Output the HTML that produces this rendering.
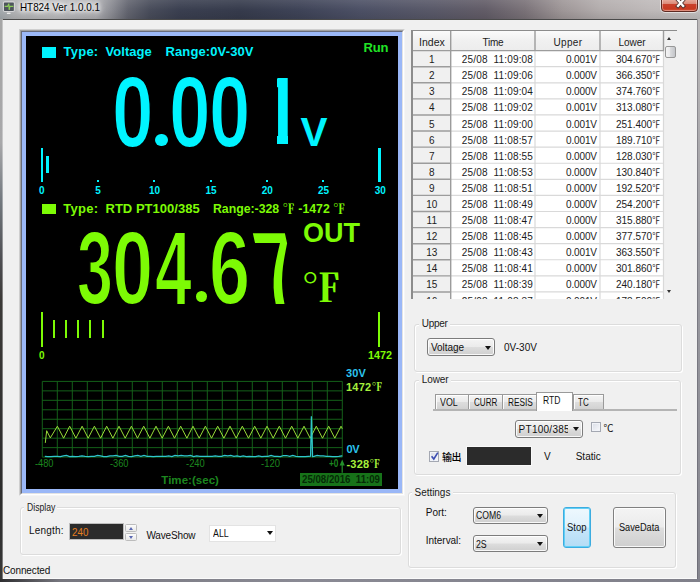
<!DOCTYPE html>
<html lang="en"><head><meta charset="utf-8"><title>HT824 Ver 1.0.0.1</title>
<style>
html,body{margin:0;padding:0}
body{width:700px;height:582px;overflow:hidden;position:relative;background:#f0f0f0;font-family:"Liberation Sans",sans-serif;font-size:10px;color:#000}
div,span,svg{box-sizing:border-box}
.abs{position:absolute}
.grp{position:absolute;border:1px solid #dcdcdc;border-radius:3px;box-shadow:1px 1px 0 #fff, inset 1px 1px 0 #fff}
.combo{position:absolute;border:1px solid #7c7c7c;border-radius:3px;background:linear-gradient(#f4f4f4,#ebebeb 48%,#dddddd 52%,#cfcfcf);box-shadow:inset 0 0 0 1px rgba(255,255,255,.85)}
.arr{position:absolute;width:0;height:0;border-left:3px solid transparent;border-right:3px solid transparent;border-top:4px solid #111}
.btn{position:absolute;border:1px solid #808080;border-radius:3px;background:linear-gradient(#f4f4f4,#ebebeb 48%,#dddddd 52%,#cfcfcf);box-shadow:inset 0 0 0 1px rgba(255,255,255,.85)}
.tab{position:absolute;border:1px solid #9a9a9a;border-bottom:none;background:linear-gradient(#f4f4f4,#ebebeb 48%,#dddddd 52%,#d2d2d2)}
</style></head><body>
<div class="window-chrome">
<div class="abs" style="left:0;top:0;width:700px;height:20px;background:linear-gradient(to right,#a4aaae 0,#b3b4b6 14px,#bcbcbe 55px,#aeaeb2 96px,#8a8b92 112px,#62646f 128px,#484c5a 150px,#3a3f50 180px,#363b4c 240px,#3e4357 300px,#4c5065 360px,#585868 430px,#625c67 485px,#7a7278 525px,#9e9697 562px,#b3adad 600px,#beb9b9 650px,#c2bfbf 700px)"></div>
<div class="abs" style="left:0;top:0;width:700px;height:20px;background:linear-gradient(to bottom,rgba(255,255,255,.10),rgba(255,255,255,0) 50%,rgba(0,0,0,.10))"></div>
<div class="abs" style="left:0;top:19px;width:700px;height:1px;background:#4a4a4a"></div>
<div class="abs" style="left:0;top:19px;width:3px;height:563px;background:linear-gradient(to bottom,#a6a6a6 0,#a8a8aa 22%,#747a80 32%,#4e4e52 43%,#3c3a38 50%,#2c2c2c 85%,#383838 100%)"></div>
<div class="abs" style="left:2px;top:20px;width:1px;height:559px;background:rgba(255,255,255,.35)"></div>
<div class="abs" style="left:697px;top:19px;width:3px;height:563px;background:linear-gradient(to bottom,#bdbaba 0,#9c9ca2 40%,#85858e 100%)"></div>
<div class="abs" style="left:697px;top:19px;width:1px;height:560px;background:rgba(70,70,80,.35)"></div>
<div class="abs" style="left:0;top:579px;width:700px;height:3px;background:linear-gradient(to right,#2e2e30 0,#77777f 60px,#8a8a94 300px,#80808a 700px)"></div>
<div class="abs" style="left:3px;top:578px;width:694px;height:1px;background:#fafafa"></div>
<svg class="abs" style="left:2px;top:0px" width="15" height="16" viewBox="0 0 15 16">
<rect x="1.4" y="1.9" width="11" height="9.6" rx="1.2" fill="#4d545c" stroke="#d6d6d8" stroke-width="1.1"/>
<path d="M2.6 6.4 H5.6 L6.8 3.6 L7.2 10 L7.9 6.4 H11.4" stroke="#8ccb5a" stroke-width="1.1" fill="none"/>
<rect x="4.9" y="12.7" width="3.6" height="1.3" fill="#ececec"/><rect x="6" y="11.8" width="1.5" height="1.2" fill="#c4c4c4"/></svg>
<span style="position:absolute;white-space:pre;line-height:1;left:20.00px;top:2.20px;font-family:'Liberation Sans','Noto Sans CJK SC',sans-serif;font-size:10.5px;font-weight:normal;color:#000;letter-spacing:0.000px;text-shadow:0 0 5px #fff,0 0 7px #fff,0 0 9px #fff,0 0 4px #fff;transform-origin:0 50%;transform:scaleX(0.9386);">HT824 Ver 1.0.0.1</span>
<div class="abs" style="left:661px;top:-2px;width:37px;height:14px;border:1px solid #5e2a22;border-radius:0 0 4px 4px;background:linear-gradient(#e9b0a2 0,#dc8b7a 38%,#c9402b 45%,#c83a22 80%,#d2553a 100%);box-shadow:0 0 0 1px rgba(255,255,255,.55), inset 0 0 0 1px rgba(255,255,255,.35)"></div>
<svg class="abs" style="left:674px;top:-3px" width="13" height="13" viewBox="0 0 13 13"><path d="M4 3 L9.2 9 M9.2 3 L4 9" stroke="#4a2f2c" stroke-width="3.9" stroke-linecap="square"/><path d="M4 3 L9.2 9 M9.2 3 L4 9" stroke="#fff" stroke-width="2.3" stroke-linecap="square"/></svg>
</div>
<div class="lcd-panel">
<div class="abs" style="left:19px;top:29px;width:386px;height:467px;border:1px solid;border-color:#cfcfcf #f6f6f6 #f6f6f6 #cfcfcf"></div>
<div class="abs" style="left:20px;top:30px;width:384px;height:465px;border:1px solid;border-color:#a0a0a0 #fff #fff #a0a0a0"></div>
<div class="abs" style="left:21px;top:31px;width:382px;height:463px;border:1px solid;border-color:#686c7c #e3e3e3 #e3e3e3 #686c7c;background:#000"></div>
<div class="abs" style="left:22px;top:32px;width:380px;height:461px;border:4px solid #9ab7f7;background:#000"></div>
<div class="abs" style="left:42px;top:47px;width:13.5px;height:10.5px;background:#00f4ff"></div>
<span style="position:absolute;white-space:pre;line-height:1;left:63.50px;top:45.30px;font-family:'Liberation Sans','Noto Sans CJK SC',sans-serif;font-size:13px;font-weight:bold;color:#00f4ff;letter-spacing:0.245px;">Type:</span>
<span style="position:absolute;white-space:pre;line-height:1;left:105.50px;top:45.30px;font-family:'Liberation Sans','Noto Sans CJK SC',sans-serif;font-size:13px;font-weight:bold;color:#00f4ff;letter-spacing:0.050px;">Voltage</span>
<span style="position:absolute;white-space:pre;line-height:1;left:165.50px;top:45.30px;font-family:'Liberation Sans','Noto Sans CJK SC',sans-serif;font-size:13px;font-weight:bold;color:#00f4ff;letter-spacing:0.118px;">Range:0V-30V</span>
<span style="position:absolute;white-space:pre;line-height:1;left:363.50px;top:40.80px;font-family:'Liberation Sans','Noto Sans CJK SC',sans-serif;font-size:13px;font-weight:bold;color:#20e426;letter-spacing:-0.141px;">Run</span>
<div class="abs" style="left:0;top:0;font:bold 100px/1 'Liberation Sans',sans-serif;color:#00f4ff;white-space:nowrap;-webkit-text-stroke:2px #000"><span style="position:absolute;left:111.97px;top:60.41px;transform-origin:0 0;transform:scale(0.7457,1.0246)">0</span><span style="position:absolute;left:155.40px;top:134.20px;width:12.20px;height:12.00px;overflow:hidden;border-radius:50%"><span style="position:absolute;left:-10.47px;top:-77.46px;transform-origin:0 0;transform:scale(1.1833,1.0769)">.</span></span><span style="position:absolute;left:168.86px;top:60.41px;transform-origin:0 0;transform:scale(0.7478,1.0246)">0</span><span style="position:absolute;left:209.08px;top:60.41px;transform-origin:0 0;transform:scale(0.7435,1.0246)">0</span><span style="position:absolute;left:277.20px;top:76.90px;width:10.70px;height:69.30px;overflow:hidden"><span style="position:absolute;left:-19.37px;top:-14.57px;transform-origin:0 0;transform:scale(0.8244,0.9746)">1</span></span></div>
<span style="position:absolute;white-space:pre;line-height:1;left:300.50px;top:111.70px;font-family:'Liberation Sans','Noto Sans CJK SC',sans-serif;font-size:40.5px;font-weight:bold;color:#00f4ff;letter-spacing:0.000px;">V</span>
<div class="abs" style="left:41px;top:148px;width:2.2px;height:34px;background:#00f4ff"></div>
<div class="abs" style="left:46.4px;top:156.3px;width:2.2px;height:16.7px;background:#00f4ff"></div>
<div class="abs" style="left:378.4px;top:148px;width:2.4px;height:34px;background:#00f4ff"></div>
<div class="abs" style="left:97px;top:179.6px;width:2px;height:2.2px;background:#00f4ff"></div>
<div class="abs" style="left:153.3px;top:179.6px;width:2px;height:2.2px;background:#00f4ff"></div>
<div class="abs" style="left:209.7px;top:179.6px;width:2px;height:2.2px;background:#00f4ff"></div>
<div class="abs" style="left:266px;top:179.6px;width:2px;height:2.2px;background:#00f4ff"></div>
<div class="abs" style="left:322.4px;top:179.6px;width:2px;height:2.2px;background:#00f4ff"></div>
<span style="position:absolute;white-space:pre;line-height:1;left:38.92px;top:186.40px;font-family:'Liberation Sans','Noto Sans CJK SC',sans-serif;font-size:10px;font-weight:bold;color:#00f4ff;letter-spacing:0.000px;">0</span>
<span style="position:absolute;white-space:pre;line-height:1;left:95.22px;top:186.40px;font-family:'Liberation Sans','Noto Sans CJK SC',sans-serif;font-size:10px;font-weight:bold;color:#00f4ff;letter-spacing:0.000px;">5</span>
<span style="position:absolute;white-space:pre;line-height:1;left:149.04px;top:186.40px;font-family:'Liberation Sans','Noto Sans CJK SC',sans-serif;font-size:10px;font-weight:bold;color:#00f4ff;letter-spacing:0.000px;">10</span>
<span style="position:absolute;white-space:pre;line-height:1;left:205.44px;top:186.40px;font-family:'Liberation Sans','Noto Sans CJK SC',sans-serif;font-size:10px;font-weight:bold;color:#00f4ff;letter-spacing:0.000px;">15</span>
<span style="position:absolute;white-space:pre;line-height:1;left:261.64px;top:186.40px;font-family:'Liberation Sans','Noto Sans CJK SC',sans-serif;font-size:10px;font-weight:bold;color:#00f4ff;letter-spacing:0.000px;">20</span>
<span style="position:absolute;white-space:pre;line-height:1;left:318.04px;top:186.40px;font-family:'Liberation Sans','Noto Sans CJK SC',sans-serif;font-size:10px;font-weight:bold;color:#00f4ff;letter-spacing:0.000px;">25</span>
<span style="position:absolute;white-space:pre;line-height:1;left:374.64px;top:186.40px;font-family:'Liberation Sans','Noto Sans CJK SC',sans-serif;font-size:10px;font-weight:bold;color:#00f4ff;letter-spacing:0.000px;">30</span>
<div class="abs" style="left:42px;top:204px;width:13.5px;height:10px;background:#7dfb05"></div>
<span style="position:absolute;white-space:pre;line-height:1;left:63.20px;top:201.80px;font-family:'Liberation Sans','Noto Sans CJK SC',sans-serif;font-size:13px;font-weight:bold;color:#7dfb05;letter-spacing:0.270px;">Type:</span>
<span style="position:absolute;white-space:pre;line-height:1;left:105.50px;top:201.80px;font-family:'Liberation Sans','Noto Sans CJK SC',sans-serif;font-size:13px;font-weight:bold;color:#7dfb05;letter-spacing:0.022px;">RTD PT100/385</span>
<span style="position:absolute;white-space:pre;line-height:1;left:213.30px;top:201.80px;font-family:'Liberation Sans','Noto Serif CJK SC',serif;font-size:13px;font-weight:bold;color:#7dfb05;letter-spacing:0.000px;transform-origin:0 50%;transform:scaleX(0.9446);">Range:-328 ℉ -1472 ℉</span>
<div class="abs" style="left:0;top:0;font:bold 100px/1 'Liberation Sans',sans-serif;color:#7dfb05;white-space:nowrap;-webkit-text-stroke:2px #000"><span style="position:absolute;left:77.06px;top:216.54px;transform-origin:0 0;transform:scale(0.6458,1.0290)">3</span><span style="position:absolute;left:112.30px;top:216.54px;transform-origin:0 0;transform:scale(0.7391,1.0290)">0</span><span style="position:absolute;left:154.88px;top:214.99px;transform-origin:0 0;transform:scale(0.6615,1.0597)">4</span><span style="position:absolute;left:196.00px;top:290.60px;width:11.40px;height:11.80px;overflow:hidden;border-radius:50%"><span style="position:absolute;left:-9.93px;top:-76.37px;transform-origin:0 0;transform:scale(1.1167,1.0615)">.</span></span><span style="position:absolute;left:209.30px;top:216.54px;transform-origin:0 0;transform:scale(0.7391,1.0290)">6</span><span style="position:absolute;left:245.16px;top:214.99px;transform-origin:0 0;transform:scale(0.7125,1.0597) skewX(18.26deg)">7</span></div>
<span style="position:absolute;white-space:pre;line-height:1;left:303.00px;top:219.60px;font-family:'Liberation Sans','Noto Sans CJK SC',sans-serif;font-size:27px;font-weight:bold;color:#7dfb05;letter-spacing:-0.050px;">OUT</span>
<span style="position:absolute;white-space:pre;line-height:1;left:301.15px;top:265.93px;font-family:'Noto Serif CJK SC',serif;font-weight:bold;font-size:37.92px;color:#7dfb05;transform-origin:0 0;transform:scaleX(1.0705)">℉</span>
<div class="abs" style="left:41px;top:312px;width:2.2px;height:34.6px;background:#7dfb05"></div>
<div class="abs" style="left:378.2px;top:312px;width:2.3px;height:34.6px;background:#7dfb05"></div>
<div class="abs" style="left:52.6px;top:319.8px;width:2.1px;height:18.4px;background:#7dfb05"></div>
<div class="abs" style="left:64.8px;top:319.8px;width:2.1px;height:18.4px;background:#7dfb05"></div>
<div class="abs" style="left:77px;top:319.8px;width:2.1px;height:18.4px;background:#7dfb05"></div>
<div class="abs" style="left:89.2px;top:319.8px;width:2.1px;height:18.4px;background:#7dfb05"></div>
<div class="abs" style="left:101.5px;top:319.8px;width:2.1px;height:18.4px;background:#7dfb05"></div>
<span style="position:absolute;white-space:pre;line-height:1;left:39.02px;top:350.50px;font-family:'Liberation Sans','Noto Sans CJK SC',sans-serif;font-size:10px;font-weight:bold;color:#7dfb05;letter-spacing:0.000px;">0</span>
<span style="position:absolute;white-space:pre;line-height:1;left:368.00px;top:351.00px;font-family:'Liberation Sans','Noto Sans CJK SC',sans-serif;font-size:10px;font-weight:bold;color:#7dfb05;letter-spacing:0.000px;transform-origin:0 50%;transform:scaleX(1.0787);">1472</span>
<svg class="abs" style="left:0;top:0" width="700" height="582" viewBox="0 0 700 582"><path d="M42.30 381.40 V457.10 M57.30 381.40 V457.10 M72.30 381.40 V457.10 M87.30 381.40 V457.10 M102.30 381.40 V457.10 M117.30 381.40 V457.10 M132.30 381.40 V457.10 M147.30 381.40 V457.10 M162.30 381.40 V457.10 M177.30 381.40 V457.10 M192.30 381.40 V457.10 M207.30 381.40 V457.10 M222.30 381.40 V457.10 M237.30 381.40 V457.10 M252.30 381.40 V457.10 M267.30 381.40 V457.10 M282.30 381.40 V457.10 M297.30 381.40 V457.10 M312.30 381.40 V457.10 M327.30 381.40 V457.10 M342.30 381.40 V457.10 M42.30 381.40 H342.30 M42.30 390.86 H342.30 M42.30 400.32 H342.30 M42.30 409.79 H342.30 M42.30 419.25 H342.30 M42.30 428.71 H342.30 M42.30 438.18 H342.30 M42.30 447.64 H342.30 M42.30 457.10 H342.30 " stroke="#15651a" stroke-width="0.95" fill="none"/><polyline points="45.3,442.9 46.7,430.7 50.3,437.9 57.4,426.2 63.6,438.2 69.7,426.2 75.9,438.2 82.1,426.2 88.2,438.2 94.4,426.2 100.6,438.2 106.7,426.2 112.9,438.2 119.0,426.2 125.2,438.2 131.4,426.2 137.5,438.2 143.7,426.2 149.9,438.2 156.0,426.2 162.2,438.2 168.4,426.2 174.5,438.2 180.7,426.2 186.9,438.2 193.0,426.2 199.2,438.2 205.4,426.2 211.5,438.2 217.7,426.2 223.9,438.2 230.0,426.2 236.2,438.2 242.3,426.2 248.5,438.2 254.7,426.2 260.8,438.2 267.0,426.2 273.2,438.2 279.3,426.2 285.5,438.2 291.7,426.2 297.8,438.2 304.0,426.2 310.2,438.2 316.3,426.2 322.5,438.2 328.7,426.2 334.8,438.2 341.0,426.2 342.3,428.7" stroke="#98dc38" stroke-width="1.0" fill="none" stroke-linejoin="round"/><polyline points="44.8,456.4 47.9,456.7 51.0,456.7 54.1,456.4 57.2,456.4 60.3,456.7 63.4,455.8 66.5,455.5 69.6,456.7 72.7,456.4 75.8,456.7 78.9,456.4 82.0,455.8 85.1,456.4 88.2,456.7 91.3,456.4 94.4,456.4 97.5,455.5 100.6,455.8 103.7,456.7 106.8,456.7 109.9,455.8 113.0,455.8 116.1,455.5 119.2,456.4 122.3,456.4 125.4,455.5 128.5,456.4 131.6,456.7 134.7,455.8 137.8,455.5 140.9,456.4 144.0,455.5 147.1,456.4 150.2,456.4 153.3,456.7 156.4,456.4 159.5,456.4 162.6,456.4 165.7,456.4 168.8,455.8 171.9,456.7 175.0,455.5 178.1,455.8 181.2,455.5 184.3,455.8 187.4,455.8 190.5,455.5 193.6,456.7 196.7,455.8 199.8,456.4 202.9,456.4 206.0,456.4 209.1,456.4 212.2,456.4 215.3,455.8 218.4,456.4 221.5,456.4 224.6,455.5 227.7,455.8 230.8,455.5 233.9,456.4 237.0,455.8 240.1,456.7 243.2,455.8 246.3,456.7 249.4,456.4 252.5,456.7 255.6,456.7 258.7,455.8 261.8,456.7 264.9,456.4 268.0,456.4 271.1,455.5 274.2,456.4 277.3,456.4 280.4,456.7 283.5,455.5 286.6,455.5 289.7,456.4 292.8,455.5 295.9,456.4 299.0,456.7 302.1,456.7 305.2,456.7 308.3,456.4 310.6,456.2 311.4,416.3 312.6,456.6 314.0,456.4 317.1,455.5 320.2,455.8 323.3,455.8 326.4,456.4 329.5,456.4 332.6,456.7 335.7,456.7 338.8,456.4 341.9,455.8 342.3,455.8" stroke="#2fc6cc" stroke-width="1.25" fill="none"/><path d="M342.2 472.8 V462" stroke="#23902a" stroke-width="1.2"/><path d="M339.6 465.6 L342.2 459.4 L344.8 465.6 Z" fill="#23902a"/></svg>
<span style="position:absolute;white-space:pre;line-height:1;left:346.00px;top:368.10px;font-family:'Liberation Sans','Noto Sans CJK SC',sans-serif;font-size:11px;font-weight:bold;color:#2cc4ee;letter-spacing:0.111px;">30V</span>
<span style="position:absolute;white-space:pre;line-height:1;left:346.00px;top:382.40px;font-family:'Liberation Sans','Noto Serif CJK SC',serif;font-size:11px;font-weight:bold;color:#a6f03c;letter-spacing:0.254px;">1472℉</span>
<span style="position:absolute;white-space:pre;line-height:1;left:346.50px;top:444.10px;font-family:'Liberation Sans','Noto Sans CJK SC',sans-serif;font-size:11px;font-weight:bold;color:#2cc4ee;letter-spacing:-0.269px;">0V</span>
<span style="position:absolute;white-space:pre;line-height:1;left:346.50px;top:458.70px;font-family:'Liberation Sans','Noto Serif CJK SC',serif;font-size:11px;font-weight:bold;color:#a6f03c;letter-spacing:0.192px;">-328℉</span>
<span style="position:absolute;white-space:pre;line-height:1;left:35.30px;top:459.00px;font-family:'Liberation Sans','Noto Sans CJK SC',sans-serif;font-size:10px;font-weight:normal;color:#1c861f;letter-spacing:0.000px;transform-origin:0 50%;transform:scaleX(0.9243);">-480</span>
<span style="position:absolute;white-space:pre;line-height:1;left:110.00px;top:459.00px;font-family:'Liberation Sans','Noto Sans CJK SC',sans-serif;font-size:10px;font-weight:normal;color:#1c861f;letter-spacing:0.000px;transform-origin:0 50%;transform:scaleX(0.9243);">-360</span>
<span style="position:absolute;white-space:pre;line-height:1;left:185.70px;top:459.00px;font-family:'Liberation Sans','Noto Sans CJK SC',sans-serif;font-size:10px;font-weight:normal;color:#1c861f;letter-spacing:0.000px;transform-origin:0 50%;transform:scaleX(0.9393);">-240</span>
<span style="position:absolute;white-space:pre;line-height:1;left:260.50px;top:459.00px;font-family:'Liberation Sans','Noto Sans CJK SC',sans-serif;font-size:10px;font-weight:normal;color:#1c861f;letter-spacing:0.000px;transform-origin:0 50%;transform:scaleX(0.9443);">-120</span>
<span style="position:absolute;white-space:pre;line-height:1;left:328.90px;top:459.00px;font-family:'Liberation Sans','Noto Sans CJK SC',sans-serif;font-size:10px;font-weight:bold;color:#1c861f;letter-spacing:0.000px;transform-origin:0 50%;transform:scaleX(0.8241);">+0</span>
<span style="position:absolute;white-space:pre;line-height:1;left:161.30px;top:475.10px;font-family:'Liberation Sans','Noto Sans CJK SC',sans-serif;font-size:11.5px;font-weight:bold;color:#1c861f;letter-spacing:0.032px;">Time:(sec)</span>
<div class="abs" style="left:300.2px;top:472.9px;width:81.8px;height:12.9px;background:#177319"></div>
<span style="position:absolute;white-space:pre;line-height:1;left:302.30px;top:474.80px;font-family:'Liberation Sans','Noto Sans CJK SC',sans-serif;font-size:10.3px;font-weight:bold;color:#052a06;letter-spacing:0.000px;transform-origin:0 50%;transform:scaleX(0.9394);">25/08/2016  11:09</span>
</div>
<div class="data-table">
<div class="abs" style="left:411px;top:30px;width:265.5px;height:269px;background:#fff;border-left:2px solid #8c8c8c;border-top:1.5px solid #8c8c8c;overflow:hidden"></div>
<div class="abs" style="left:413px;top:31.3px;width:250.5px;height:19.3px;background:linear-gradient(#fbfbfb,#f1f1f1 45%,#ececec)"></div>
<div class="abs" style="left:413px;top:50.6px;width:37.7px;height:248.4px;background:#f0f0f0"></div>
<div class="abs" style="left:664px;top:31.3px;width:12.5px;height:267.7px;background:#f0f0f0"></div>
<svg class="abs" style="left:0;top:0" width="700" height="300" viewBox="0 0 700 300"><path d="M451 66.69 H663.5 M451 82.78 H663.5 M451 98.87 H663.5 M451 114.96 H663.5 M451 131.05 H663.5 M451 147.14 H663.5 M451 163.23 H663.5 M451 179.32 H663.5 M451 195.41 H663.5 M451 211.50 H663.5 M451 227.59 H663.5 M451 243.68 H663.5 M451 259.77 H663.5 M451 275.86 H663.5 M451 291.95 H663.5 M535.00 50.60 V299.00 M600.00 50.60 V299.00 M663.50 50.60 V299.00 " stroke="#d9d9d9" stroke-width="1.2" fill="none"/><path d="M413 50.60 H664 M413 66.69 H451 M413 82.78 H451 M413 98.87 H451 M413 114.96 H451 M413 131.05 H451 M413 147.14 H451 M413 163.23 H451 M413 179.32 H451 M413 195.41 H451 M413 211.50 H451 M413 227.59 H451 M413 243.68 H451 M413 259.77 H451 M413 275.86 H451 M413 291.95 H451 M450.70 31 V299.00 M535.00 31 V50.60 M600.00 31 V50.60 M663.50 31 V50.60 " stroke="#9c9c9c" stroke-width="1.4" fill="none"/></svg>
<span style="position:absolute;white-space:pre;line-height:1;left:419.20px;top:37.70px;font-family:'Liberation Sans','Noto Sans CJK SC',sans-serif;font-size:10px;font-weight:normal;color:#1c1c1c;letter-spacing:0.000px;transform-origin:0 50%;transform:scaleX(1.0544);">Index</span>
<span style="position:absolute;white-space:pre;line-height:1;left:482.50px;top:37.70px;font-family:'Liberation Sans','Noto Sans CJK SC',sans-serif;font-size:10px;font-weight:normal;color:#1c1c1c;letter-spacing:-0.286px;">Time</span>
<span style="position:absolute;white-space:pre;line-height:1;left:553.60px;top:37.70px;font-family:'Liberation Sans','Noto Sans CJK SC',sans-serif;font-size:10px;font-weight:normal;color:#1c1c1c;letter-spacing:0.287px;">Upper</span>
<span style="position:absolute;white-space:pre;line-height:1;left:618.50px;top:37.70px;font-family:'Liberation Sans','Noto Sans CJK SC',sans-serif;font-size:10px;font-weight:normal;color:#1c1c1c;letter-spacing:-0.012px;">Lower</span>
<div class="abs" style="left:411px;top:30px;width:265.5px;height:269px;overflow:hidden"><div class="abs" style="left:-411px;top:-30px;width:700px;height:582px">
<span style="position:absolute;white-space:pre;line-height:1;left:429.02px;top:55.20px;font-family:'Liberation Sans','Noto Sans CJK SC',sans-serif;font-size:10px;font-weight:normal;color:#1c1c1c;letter-spacing:0.000px;">1</span>
<span style="position:absolute;white-space:pre;line-height:1;left:461.80px;top:55.20px;font-family:'Liberation Sans','Noto Sans CJK SC',sans-serif;font-size:10px;font-weight:normal;color:#1c1c1c;letter-spacing:0.167px;">25/08  11:09:08</span>
<span style="position:absolute;white-space:pre;line-height:1;left:566.00px;top:55.20px;font-family:'Liberation Sans','Noto Sans CJK SC',sans-serif;font-size:10px;font-weight:normal;color:#1c1c1c;letter-spacing:-0.141px;">0.001V</span>
<span style="position:absolute;white-space:pre;line-height:1;left:616.00px;top:55.20px;font-family:'Liberation Sans','Noto Sans CJK SC',sans-serif;font-size:10px;font-weight:normal;color:#1c1c1c;letter-spacing:0.000px;">304.670<span style="display:inline-block;transform-origin:0 50%;transform:scaleX(.82)">℉</span></span>
<span style="position:absolute;white-space:pre;line-height:1;left:429.02px;top:71.29px;font-family:'Liberation Sans','Noto Sans CJK SC',sans-serif;font-size:10px;font-weight:normal;color:#1c1c1c;letter-spacing:0.000px;">2</span>
<span style="position:absolute;white-space:pre;line-height:1;left:461.80px;top:71.29px;font-family:'Liberation Sans','Noto Sans CJK SC',sans-serif;font-size:10px;font-weight:normal;color:#1c1c1c;letter-spacing:0.167px;">25/08  11:09:06</span>
<span style="position:absolute;white-space:pre;line-height:1;left:566.00px;top:71.29px;font-family:'Liberation Sans','Noto Sans CJK SC',sans-serif;font-size:10px;font-weight:normal;color:#1c1c1c;letter-spacing:-0.141px;">0.000V</span>
<span style="position:absolute;white-space:pre;line-height:1;left:616.00px;top:71.29px;font-family:'Liberation Sans','Noto Sans CJK SC',sans-serif;font-size:10px;font-weight:normal;color:#1c1c1c;letter-spacing:0.000px;">366.350<span style="display:inline-block;transform-origin:0 50%;transform:scaleX(.82)">℉</span></span>
<span style="position:absolute;white-space:pre;line-height:1;left:429.02px;top:87.38px;font-family:'Liberation Sans','Noto Sans CJK SC',sans-serif;font-size:10px;font-weight:normal;color:#1c1c1c;letter-spacing:0.000px;">3</span>
<span style="position:absolute;white-space:pre;line-height:1;left:461.80px;top:87.38px;font-family:'Liberation Sans','Noto Sans CJK SC',sans-serif;font-size:10px;font-weight:normal;color:#1c1c1c;letter-spacing:0.167px;">25/08  11:09:04</span>
<span style="position:absolute;white-space:pre;line-height:1;left:566.00px;top:87.38px;font-family:'Liberation Sans','Noto Sans CJK SC',sans-serif;font-size:10px;font-weight:normal;color:#1c1c1c;letter-spacing:-0.141px;">0.000V</span>
<span style="position:absolute;white-space:pre;line-height:1;left:616.00px;top:87.38px;font-family:'Liberation Sans','Noto Sans CJK SC',sans-serif;font-size:10px;font-weight:normal;color:#1c1c1c;letter-spacing:0.000px;">374.760<span style="display:inline-block;transform-origin:0 50%;transform:scaleX(.82)">℉</span></span>
<span style="position:absolute;white-space:pre;line-height:1;left:429.02px;top:103.47px;font-family:'Liberation Sans','Noto Sans CJK SC',sans-serif;font-size:10px;font-weight:normal;color:#1c1c1c;letter-spacing:0.000px;">4</span>
<span style="position:absolute;white-space:pre;line-height:1;left:461.80px;top:103.47px;font-family:'Liberation Sans','Noto Sans CJK SC',sans-serif;font-size:10px;font-weight:normal;color:#1c1c1c;letter-spacing:0.167px;">25/08  11:09:02</span>
<span style="position:absolute;white-space:pre;line-height:1;left:566.00px;top:103.47px;font-family:'Liberation Sans','Noto Sans CJK SC',sans-serif;font-size:10px;font-weight:normal;color:#1c1c1c;letter-spacing:-0.141px;">0.001V</span>
<span style="position:absolute;white-space:pre;line-height:1;left:616.00px;top:103.47px;font-family:'Liberation Sans','Noto Sans CJK SC',sans-serif;font-size:10px;font-weight:normal;color:#1c1c1c;letter-spacing:0.000px;">313.080<span style="display:inline-block;transform-origin:0 50%;transform:scaleX(.82)">℉</span></span>
<span style="position:absolute;white-space:pre;line-height:1;left:429.02px;top:119.56px;font-family:'Liberation Sans','Noto Sans CJK SC',sans-serif;font-size:10px;font-weight:normal;color:#1c1c1c;letter-spacing:0.000px;">5</span>
<span style="position:absolute;white-space:pre;line-height:1;left:461.80px;top:119.56px;font-family:'Liberation Sans','Noto Sans CJK SC',sans-serif;font-size:10px;font-weight:normal;color:#1c1c1c;letter-spacing:0.167px;">25/08  11:09:00</span>
<span style="position:absolute;white-space:pre;line-height:1;left:566.00px;top:119.56px;font-family:'Liberation Sans','Noto Sans CJK SC',sans-serif;font-size:10px;font-weight:normal;color:#1c1c1c;letter-spacing:-0.141px;">0.001V</span>
<span style="position:absolute;white-space:pre;line-height:1;left:616.00px;top:119.56px;font-family:'Liberation Sans','Noto Sans CJK SC',sans-serif;font-size:10px;font-weight:normal;color:#1c1c1c;letter-spacing:0.000px;">251.400<span style="display:inline-block;transform-origin:0 50%;transform:scaleX(.82)">℉</span></span>
<span style="position:absolute;white-space:pre;line-height:1;left:429.02px;top:135.65px;font-family:'Liberation Sans','Noto Sans CJK SC',sans-serif;font-size:10px;font-weight:normal;color:#1c1c1c;letter-spacing:0.000px;">6</span>
<span style="position:absolute;white-space:pre;line-height:1;left:461.80px;top:135.65px;font-family:'Liberation Sans','Noto Sans CJK SC',sans-serif;font-size:10px;font-weight:normal;color:#1c1c1c;letter-spacing:0.167px;">25/08  11:08:57</span>
<span style="position:absolute;white-space:pre;line-height:1;left:566.00px;top:135.65px;font-family:'Liberation Sans','Noto Sans CJK SC',sans-serif;font-size:10px;font-weight:normal;color:#1c1c1c;letter-spacing:-0.141px;">0.001V</span>
<span style="position:absolute;white-space:pre;line-height:1;left:616.00px;top:135.65px;font-family:'Liberation Sans','Noto Sans CJK SC',sans-serif;font-size:10px;font-weight:normal;color:#1c1c1c;letter-spacing:0.000px;">189.710<span style="display:inline-block;transform-origin:0 50%;transform:scaleX(.82)">℉</span></span>
<span style="position:absolute;white-space:pre;line-height:1;left:429.02px;top:151.74px;font-family:'Liberation Sans','Noto Sans CJK SC',sans-serif;font-size:10px;font-weight:normal;color:#1c1c1c;letter-spacing:0.000px;">7</span>
<span style="position:absolute;white-space:pre;line-height:1;left:461.80px;top:151.74px;font-family:'Liberation Sans','Noto Sans CJK SC',sans-serif;font-size:10px;font-weight:normal;color:#1c1c1c;letter-spacing:0.167px;">25/08  11:08:55</span>
<span style="position:absolute;white-space:pre;line-height:1;left:566.00px;top:151.74px;font-family:'Liberation Sans','Noto Sans CJK SC',sans-serif;font-size:10px;font-weight:normal;color:#1c1c1c;letter-spacing:-0.141px;">0.000V</span>
<span style="position:absolute;white-space:pre;line-height:1;left:616.00px;top:151.74px;font-family:'Liberation Sans','Noto Sans CJK SC',sans-serif;font-size:10px;font-weight:normal;color:#1c1c1c;letter-spacing:0.000px;">128.030<span style="display:inline-block;transform-origin:0 50%;transform:scaleX(.82)">℉</span></span>
<span style="position:absolute;white-space:pre;line-height:1;left:429.02px;top:167.83px;font-family:'Liberation Sans','Noto Sans CJK SC',sans-serif;font-size:10px;font-weight:normal;color:#1c1c1c;letter-spacing:0.000px;">8</span>
<span style="position:absolute;white-space:pre;line-height:1;left:461.80px;top:167.83px;font-family:'Liberation Sans','Noto Sans CJK SC',sans-serif;font-size:10px;font-weight:normal;color:#1c1c1c;letter-spacing:0.167px;">25/08  11:08:53</span>
<span style="position:absolute;white-space:pre;line-height:1;left:566.00px;top:167.83px;font-family:'Liberation Sans','Noto Sans CJK SC',sans-serif;font-size:10px;font-weight:normal;color:#1c1c1c;letter-spacing:-0.141px;">0.000V</span>
<span style="position:absolute;white-space:pre;line-height:1;left:616.00px;top:167.83px;font-family:'Liberation Sans','Noto Sans CJK SC',sans-serif;font-size:10px;font-weight:normal;color:#1c1c1c;letter-spacing:0.000px;">130.840<span style="display:inline-block;transform-origin:0 50%;transform:scaleX(.82)">℉</span></span>
<span style="position:absolute;white-space:pre;line-height:1;left:429.02px;top:183.92px;font-family:'Liberation Sans','Noto Sans CJK SC',sans-serif;font-size:10px;font-weight:normal;color:#1c1c1c;letter-spacing:0.000px;">9</span>
<span style="position:absolute;white-space:pre;line-height:1;left:461.80px;top:183.92px;font-family:'Liberation Sans','Noto Sans CJK SC',sans-serif;font-size:10px;font-weight:normal;color:#1c1c1c;letter-spacing:0.167px;">25/08  11:08:51</span>
<span style="position:absolute;white-space:pre;line-height:1;left:566.00px;top:183.92px;font-family:'Liberation Sans','Noto Sans CJK SC',sans-serif;font-size:10px;font-weight:normal;color:#1c1c1c;letter-spacing:-0.141px;">0.000V</span>
<span style="position:absolute;white-space:pre;line-height:1;left:616.00px;top:183.92px;font-family:'Liberation Sans','Noto Sans CJK SC',sans-serif;font-size:10px;font-weight:normal;color:#1c1c1c;letter-spacing:0.000px;">192.520<span style="display:inline-block;transform-origin:0 50%;transform:scaleX(.82)">℉</span></span>
<span style="position:absolute;white-space:pre;line-height:1;left:426.24px;top:200.01px;font-family:'Liberation Sans','Noto Sans CJK SC',sans-serif;font-size:10px;font-weight:normal;color:#1c1c1c;letter-spacing:0.000px;">10</span>
<span style="position:absolute;white-space:pre;line-height:1;left:461.80px;top:200.01px;font-family:'Liberation Sans','Noto Sans CJK SC',sans-serif;font-size:10px;font-weight:normal;color:#1c1c1c;letter-spacing:0.167px;">25/08  11:08:49</span>
<span style="position:absolute;white-space:pre;line-height:1;left:566.00px;top:200.01px;font-family:'Liberation Sans','Noto Sans CJK SC',sans-serif;font-size:10px;font-weight:normal;color:#1c1c1c;letter-spacing:-0.141px;">0.000V</span>
<span style="position:absolute;white-space:pre;line-height:1;left:616.00px;top:200.01px;font-family:'Liberation Sans','Noto Sans CJK SC',sans-serif;font-size:10px;font-weight:normal;color:#1c1c1c;letter-spacing:0.000px;">254.200<span style="display:inline-block;transform-origin:0 50%;transform:scaleX(.82)">℉</span></span>
<span style="position:absolute;white-space:pre;line-height:1;left:426.60px;top:216.10px;font-family:'Liberation Sans','Noto Sans CJK SC',sans-serif;font-size:10px;font-weight:normal;color:#1c1c1c;letter-spacing:0.000px;">11</span>
<span style="position:absolute;white-space:pre;line-height:1;left:461.80px;top:216.10px;font-family:'Liberation Sans','Noto Sans CJK SC',sans-serif;font-size:10px;font-weight:normal;color:#1c1c1c;letter-spacing:0.167px;">25/08  11:08:47</span>
<span style="position:absolute;white-space:pre;line-height:1;left:566.00px;top:216.10px;font-family:'Liberation Sans','Noto Sans CJK SC',sans-serif;font-size:10px;font-weight:normal;color:#1c1c1c;letter-spacing:-0.141px;">0.000V</span>
<span style="position:absolute;white-space:pre;line-height:1;left:616.00px;top:216.10px;font-family:'Liberation Sans','Noto Sans CJK SC',sans-serif;font-size:10px;font-weight:normal;color:#1c1c1c;letter-spacing:0.000px;">315.880<span style="display:inline-block;transform-origin:0 50%;transform:scaleX(.82)">℉</span></span>
<span style="position:absolute;white-space:pre;line-height:1;left:426.24px;top:232.19px;font-family:'Liberation Sans','Noto Sans CJK SC',sans-serif;font-size:10px;font-weight:normal;color:#1c1c1c;letter-spacing:0.000px;">12</span>
<span style="position:absolute;white-space:pre;line-height:1;left:461.80px;top:232.19px;font-family:'Liberation Sans','Noto Sans CJK SC',sans-serif;font-size:10px;font-weight:normal;color:#1c1c1c;letter-spacing:0.167px;">25/08  11:08:45</span>
<span style="position:absolute;white-space:pre;line-height:1;left:566.00px;top:232.19px;font-family:'Liberation Sans','Noto Sans CJK SC',sans-serif;font-size:10px;font-weight:normal;color:#1c1c1c;letter-spacing:-0.141px;">0.000V</span>
<span style="position:absolute;white-space:pre;line-height:1;left:616.00px;top:232.19px;font-family:'Liberation Sans','Noto Sans CJK SC',sans-serif;font-size:10px;font-weight:normal;color:#1c1c1c;letter-spacing:0.000px;">377.570<span style="display:inline-block;transform-origin:0 50%;transform:scaleX(.82)">℉</span></span>
<span style="position:absolute;white-space:pre;line-height:1;left:426.24px;top:248.28px;font-family:'Liberation Sans','Noto Sans CJK SC',sans-serif;font-size:10px;font-weight:normal;color:#1c1c1c;letter-spacing:0.000px;">13</span>
<span style="position:absolute;white-space:pre;line-height:1;left:461.80px;top:248.28px;font-family:'Liberation Sans','Noto Sans CJK SC',sans-serif;font-size:10px;font-weight:normal;color:#1c1c1c;letter-spacing:0.167px;">25/08  11:08:43</span>
<span style="position:absolute;white-space:pre;line-height:1;left:566.00px;top:248.28px;font-family:'Liberation Sans','Noto Sans CJK SC',sans-serif;font-size:10px;font-weight:normal;color:#1c1c1c;letter-spacing:-0.141px;">0.001V</span>
<span style="position:absolute;white-space:pre;line-height:1;left:616.00px;top:248.28px;font-family:'Liberation Sans','Noto Sans CJK SC',sans-serif;font-size:10px;font-weight:normal;color:#1c1c1c;letter-spacing:0.000px;">363.550<span style="display:inline-block;transform-origin:0 50%;transform:scaleX(.82)">℉</span></span>
<span style="position:absolute;white-space:pre;line-height:1;left:426.24px;top:264.37px;font-family:'Liberation Sans','Noto Sans CJK SC',sans-serif;font-size:10px;font-weight:normal;color:#1c1c1c;letter-spacing:0.000px;">14</span>
<span style="position:absolute;white-space:pre;line-height:1;left:461.80px;top:264.37px;font-family:'Liberation Sans','Noto Sans CJK SC',sans-serif;font-size:10px;font-weight:normal;color:#1c1c1c;letter-spacing:0.167px;">25/08  11:08:41</span>
<span style="position:absolute;white-space:pre;line-height:1;left:566.00px;top:264.37px;font-family:'Liberation Sans','Noto Sans CJK SC',sans-serif;font-size:10px;font-weight:normal;color:#1c1c1c;letter-spacing:-0.141px;">0.000V</span>
<span style="position:absolute;white-space:pre;line-height:1;left:616.00px;top:264.37px;font-family:'Liberation Sans','Noto Sans CJK SC',sans-serif;font-size:10px;font-weight:normal;color:#1c1c1c;letter-spacing:0.000px;">301.860<span style="display:inline-block;transform-origin:0 50%;transform:scaleX(.82)">℉</span></span>
<span style="position:absolute;white-space:pre;line-height:1;left:426.24px;top:280.46px;font-family:'Liberation Sans','Noto Sans CJK SC',sans-serif;font-size:10px;font-weight:normal;color:#1c1c1c;letter-spacing:0.000px;">15</span>
<span style="position:absolute;white-space:pre;line-height:1;left:461.80px;top:280.46px;font-family:'Liberation Sans','Noto Sans CJK SC',sans-serif;font-size:10px;font-weight:normal;color:#1c1c1c;letter-spacing:0.167px;">25/08  11:08:39</span>
<span style="position:absolute;white-space:pre;line-height:1;left:566.00px;top:280.46px;font-family:'Liberation Sans','Noto Sans CJK SC',sans-serif;font-size:10px;font-weight:normal;color:#1c1c1c;letter-spacing:-0.141px;">0.000V</span>
<span style="position:absolute;white-space:pre;line-height:1;left:616.00px;top:280.46px;font-family:'Liberation Sans','Noto Sans CJK SC',sans-serif;font-size:10px;font-weight:normal;color:#1c1c1c;letter-spacing:0.000px;">240.180<span style="display:inline-block;transform-origin:0 50%;transform:scaleX(.82)">℉</span></span>
<span style="position:absolute;white-space:pre;line-height:1;left:426.24px;top:296.55px;font-family:'Liberation Sans','Noto Sans CJK SC',sans-serif;font-size:10px;font-weight:normal;color:#1c1c1c;letter-spacing:0.000px;">16</span>
<span style="position:absolute;white-space:pre;line-height:1;left:461.80px;top:296.55px;font-family:'Liberation Sans','Noto Sans CJK SC',sans-serif;font-size:10px;font-weight:normal;color:#1c1c1c;letter-spacing:0.167px;">25/08  11:08:37</span>
<span style="position:absolute;white-space:pre;line-height:1;left:566.00px;top:296.55px;font-family:'Liberation Sans','Noto Sans CJK SC',sans-serif;font-size:10px;font-weight:normal;color:#1c1c1c;letter-spacing:-0.141px;">0.001V</span>
<span style="position:absolute;white-space:pre;line-height:1;left:616.00px;top:296.55px;font-family:'Liberation Sans','Noto Sans CJK SC',sans-serif;font-size:10px;font-weight:normal;color:#1c1c1c;letter-spacing:0.000px;">178.500<span style="display:inline-block;transform-origin:0 50%;transform:scaleX(.82)">℉</span></span>
</div></div>
<div class="abs" style="left:665px;top:45.6px;width:10.6px;height:12.6px;border:1px solid #979797;border-radius:2px;background:linear-gradient(to right,#f5f5f5,#e9e9eb 45%,#d9dadc 50%,#c3c5c9)"></div>
<div class="abs" style="left:667.4px;top:36.6px;width:0;height:0;border-left:2.8px solid transparent;border-right:2.8px solid transparent;border-bottom:3.4px solid #333"></div>
<div class="abs" style="left:667.4px;top:290.4px;width:0;height:0;border-left:2.8px solid transparent;border-right:2.8px solid transparent;border-top:3.4px solid #333"></div>
</div>
<div class="group-upper">
<div class="grp" style="left:414px;top:323.6px;width:267.8px;height:48.6px"></div><div class="abs" style="left:419.2px;top:319.6px;width:31.2px;height:8px;background:#f0f0f0"></div><span style="position:absolute;white-space:pre;line-height:1;left:421.70px;top:319.20px;font-family:'Liberation Sans','Noto Sans CJK SC',sans-serif;font-size:10px;font-weight:normal;color:#1a1a1a;letter-spacing:-0.263px;">Upper</span>
<div class="combo" style="left:427px;top:338.4px;width:67.5px;height:17.6px"></div>
<span style="position:absolute;white-space:pre;line-height:1;left:431.00px;top:342.60px;font-family:'Liberation Sans','Noto Sans CJK SC',sans-serif;font-size:10px;font-weight:normal;color:#111;letter-spacing:-0.062px;">Voltage</span>
<div class="arr" style="left:485.2px;top:345.6px"></div>
<span style="position:absolute;white-space:pre;line-height:1;left:504.00px;top:342.60px;font-family:'Liberation Sans','Noto Sans CJK SC',sans-serif;font-size:10px;font-weight:normal;color:#111;letter-spacing:0.037px;">0V-30V</span>
</div>
<div class="group-lower">
<div class="grp" style="left:414px;top:379.6px;width:267px;height:95px"></div><div class="abs" style="left:419.3px;top:375.6px;width:31.8px;height:8px;background:#f0f0f0"></div><span style="position:absolute;white-space:pre;line-height:1;left:421.80px;top:375.00px;font-family:'Liberation Sans','Noto Sans CJK SC',sans-serif;font-size:10px;font-weight:normal;color:#1a1a1a;letter-spacing:-0.112px;">Lower</span>
<div class="abs" style="left:433px;top:408.7px;width:244px;height:2px;background:#b4b4b4"></div>
<div class="tab" style="left:434.6px;top:393.8px;width:34.6px;height:15px;box-shadow:inset 1px 1px 0 rgba(255,255,255,.9)"></div><span style="position:absolute;white-space:pre;line-height:1;left:440.40px;top:397.60px;font-family:'Liberation Sans','Noto Sans CJK SC',sans-serif;font-size:10px;font-weight:normal;color:#111;letter-spacing:0.000px;transform-origin:0 50%;transform:scaleX(0.8843);">VOL</span>
<div class="tab" style="left:468.2px;top:393.8px;width:35.2px;height:15px;box-shadow:inset 1px 1px 0 rgba(255,255,255,.9)"></div><span style="position:absolute;white-space:pre;line-height:1;left:473.60px;top:397.60px;font-family:'Liberation Sans','Noto Sans CJK SC',sans-serif;font-size:10px;font-weight:normal;color:#111;letter-spacing:0.000px;transform-origin:0 50%;transform:scaleX(0.8065);">CURR</span>
<div class="tab" style="left:502.4px;top:393.8px;width:35px;height:15px;box-shadow:inset 1px 1px 0 rgba(255,255,255,.9)"></div><span style="position:absolute;white-space:pre;line-height:1;left:507.60px;top:397.60px;font-family:'Liberation Sans','Noto Sans CJK SC',sans-serif;font-size:10px;font-weight:normal;color:#111;letter-spacing:0.000px;transform-origin:0 50%;transform:scaleX(0.8262);">RESIS</span>
<div class="tab" style="left:572.5px;top:393.8px;width:31.3px;height:15px;box-shadow:inset 1px 1px 0 rgba(255,255,255,.9)"></div><span style="position:absolute;white-space:pre;line-height:1;left:577.90px;top:397.60px;font-family:'Liberation Sans','Noto Sans CJK SC',sans-serif;font-size:10px;font-weight:normal;color:#111;letter-spacing:0.000px;transform-origin:0 50%;transform:scaleX(0.8019);">TC</span>
<div class="tab" style="left:536.3px;top:391.9px;width:36.9px;height:18.9px;background:#fff;border-color:#9a9a9a"></div><span style="position:absolute;white-space:pre;line-height:1;left:542.90px;top:396.20px;font-family:'Liberation Sans','Noto Sans CJK SC',sans-serif;font-size:10px;font-weight:normal;color:#111;letter-spacing:0.000px;transform-origin:0 50%;transform:scaleX(0.8540);">RTD</span>
<div class="combo" style="left:515.2px;top:420.4px;width:67.6px;height:17.4px"></div>
<span style="position:absolute;white-space:pre;line-height:1;left:518.60px;top:424.60px;font-family:'Liberation Sans','Noto Sans CJK SC',sans-serif;font-size:10px;font-weight:normal;color:#111;letter-spacing:0.258px;">PT100/385</span>
<div class="abs" style="left:568.4px;top:422px;width:12.6px;height:14.4px;background:linear-gradient(#f0f0f0,#e9e9e9 48%,#dbdbdb 52%,#d0d0d0)"></div>
<div class="arr" style="left:572.6px;top:427.4px"></div>
<div class="abs" style="left:591px;top:422px;width:10.2px;height:10.2px;border:1px solid #a4a8b2;background:linear-gradient(135deg,#d9dde6,#f8f9fc);box-shadow:inset 0 0 0 1px #f1f3f8"></div>
<span style="position:absolute;white-space:pre;line-height:1;left:603.40px;top:423.60px;font-family:'Liberation Sans','Noto Sans CJK SC',sans-serif;font-size:10px;font-weight:normal;color:#111;letter-spacing:0.000px;">℃</span>
<div class="abs" style="left:429.2px;top:451.4px;width:10.2px;height:10.4px;border:1px solid #a4a8b2;background:linear-gradient(135deg,#d9dde6,#f8f9fc);box-shadow:inset 0 0 0 1px #f1f3f8"></div>
<svg class="abs" style="left:429px;top:450px" width="12" height="12" viewBox="0 0 12 12"><path d="M2.6 6.2 L4.8 9 L8.8 2.6" stroke="#3c4db2" stroke-width="1.6" fill="none"/></svg>
<span style="position:absolute;white-space:pre;line-height:1;left:442.00px;top:453.20px;font-family:'Liberation Sans','Noto Sans CJK SC',sans-serif;font-size:10px;font-weight:500;color:#000;letter-spacing:-0.400px;">输出</span>
<div class="abs" style="left:467.4px;top:447.4px;width:63.6px;height:17.6px;background:#2b2b2b;box-shadow:0 0 0 1px #f9f9f9"></div>
<span style="position:absolute;white-space:pre;line-height:1;left:544.00px;top:452.00px;font-family:'Liberation Sans','Noto Sans CJK SC',sans-serif;font-size:10px;font-weight:normal;color:#111;letter-spacing:0.000px;">V</span>
<span style="position:absolute;white-space:pre;line-height:1;left:575.70px;top:452.00px;font-family:'Liberation Sans','Noto Sans CJK SC',sans-serif;font-size:10px;font-weight:normal;color:#111;letter-spacing:0.017px;">Static</span>
</div>
<div class="group-settings">
<div class="grp" style="left:407.6px;top:491.8px;width:268.8px;height:76.6px"></div><div class="abs" style="left:412.1px;top:487.8px;width:40.8px;height:8px;background:#f0f0f0"></div><span style="position:absolute;white-space:pre;line-height:1;left:414.60px;top:487.50px;font-family:'Liberation Sans','Noto Sans CJK SC',sans-serif;font-size:10px;font-weight:normal;color:#1a1a1a;letter-spacing:-0.049px;">Settings</span>
<span style="position:absolute;white-space:pre;line-height:1;left:425.80px;top:508.10px;font-family:'Liberation Sans','Noto Sans CJK SC',sans-serif;font-size:10px;font-weight:normal;color:#111;letter-spacing:-0.031px;">Port:</span>
<div class="combo" style="left:473px;top:506.6px;width:74.6px;height:17.6px"></div>
<span style="position:absolute;white-space:pre;line-height:1;left:476.40px;top:511.40px;font-family:'Liberation Sans','Noto Sans CJK SC',sans-serif;font-size:10px;font-weight:normal;color:#111;letter-spacing:0.000px;transform-origin:0 50%;transform:scaleX(0.8649);">COM6</span>
<div class="arr" style="left:537.4px;top:514px"></div>
<span style="position:absolute;white-space:pre;line-height:1;left:425.80px;top:536.10px;font-family:'Liberation Sans','Noto Sans CJK SC',sans-serif;font-size:10px;font-weight:normal;color:#111;letter-spacing:-0.035px;">Interval:</span>
<div class="combo" style="left:473px;top:534.8px;width:74.6px;height:17.6px"></div>
<span style="position:absolute;white-space:pre;line-height:1;left:476.40px;top:539.60px;font-family:'Liberation Sans','Noto Sans CJK SC',sans-serif;font-size:10px;font-weight:normal;color:#111;letter-spacing:0.000px;transform-origin:0 50%;transform:scaleX(0.8746);">2S</span>
<div class="arr" style="left:537.4px;top:542.2px"></div>
<div class="btn" style="left:562.8px;top:507px;width:28px;height:41px;border-color:#3cace0;background:linear-gradient(#eef8fe,#dff1fc 48%,#c6e6f9 52%,#b4dcf5);box-shadow:inset 0 0 0 1px #62d0f6"></div>
<span style="position:absolute;white-space:pre;line-height:1;left:566.50px;top:523.40px;font-family:'Liberation Sans','Noto Sans CJK SC',sans-serif;font-size:10px;font-weight:normal;color:#111;letter-spacing:0.000px;transform-origin:0 50%;transform:scaleX(0.9476);">Stop</span>
<div class="btn" style="left:613.2px;top:507px;width:52.6px;height:41px"></div>
<span style="position:absolute;white-space:pre;line-height:1;left:619.00px;top:523.40px;font-family:'Liberation Sans','Noto Sans CJK SC',sans-serif;font-size:10px;font-weight:normal;color:#111;letter-spacing:0.000px;transform-origin:0 50%;transform:scaleX(0.9175);">SaveData</span>
</div>
<div class="group-display">
<div class="grp" style="left:19.8px;top:506.6px;width:381.6px;height:48.4px"></div><div class="abs" style="left:24.1px;top:502.6px;width:33.3px;height:8px;background:#f0f0f0"></div><span style="position:absolute;white-space:pre;line-height:1;left:26.60px;top:502.80px;font-family:'Liberation Sans','Noto Sans CJK SC',sans-serif;font-size:10px;font-weight:normal;color:#1a1a1a;letter-spacing:0.000px;transform-origin:0 50%;transform:scaleX(0.8629);">Display</span>
<span style="position:absolute;white-space:pre;line-height:1;left:29.00px;top:526.40px;font-family:'Liberation Sans','Noto Sans CJK SC',sans-serif;font-size:10px;font-weight:normal;color:#111;letter-spacing:0.204px;">Length:</span>
<div class="abs" style="left:69.4px;top:523.4px;width:54.4px;height:16.4px;background:#2b2b2b;border:1px solid #bdbdbd"></div>
<span style="position:absolute;white-space:pre;line-height:1;left:71.80px;top:526.60px;font-family:'Liberation Sans','Noto Sans CJK SC',sans-serif;font-size:11px;font-weight:normal;color:#e57e1f;letter-spacing:0.000px;transform-origin:0 50%;transform:scaleX(0.8933);">240</span>
<div class="abs" style="left:125.4px;top:523.8px;width:11.2px;height:8.4px;border:1px solid #bcbcbc;border-radius:1.5px;background:linear-gradient(#fcfcfc,#e9e9e9)"></div>
<div class="abs" style="left:125.4px;top:533px;width:11.2px;height:8.4px;border:1px solid #bcbcbc;border-radius:1.5px;background:linear-gradient(#fcfcfc,#e9e9e9)"></div>
<div class="abs" style="left:128.6px;top:526.6px;width:0;height:0;border-left:2.4px solid transparent;border-right:2.4px solid transparent;border-bottom:3px solid #5a68b2"></div>
<div class="abs" style="left:128.6px;top:535.8px;width:0;height:0;border-left:2.4px solid transparent;border-right:2.4px solid transparent;border-top:3px solid #5a68b2"></div>
<span style="position:absolute;white-space:pre;line-height:1;left:146.40px;top:530.70px;font-family:'Liberation Sans','Noto Sans CJK SC',sans-serif;font-size:10px;font-weight:normal;color:#111;letter-spacing:-0.146px;">WaveShow</span>
<div class="abs" style="left:208.6px;top:525px;width:67.4px;height:17px;background:#fff;border:1px solid #e3e3e3"></div>
<span style="position:absolute;white-space:pre;line-height:1;left:212.90px;top:529.00px;font-family:'Liberation Sans','Noto Sans CJK SC',sans-serif;font-size:10px;font-weight:normal;color:#111;letter-spacing:0.000px;transform-origin:0 50%;transform:scaleX(0.8822);">ALL</span>
<div class="arr" style="left:266.6px;top:531.2px"></div>
</div>
<div class="status-bar">
<span style="position:absolute;white-space:pre;line-height:1;left:3.00px;top:566.00px;font-family:'Liberation Sans','Noto Sans CJK SC',sans-serif;font-size:10px;font-weight:normal;color:#111;letter-spacing:-0.134px;">Connected</span>
</div>
</body></html>
